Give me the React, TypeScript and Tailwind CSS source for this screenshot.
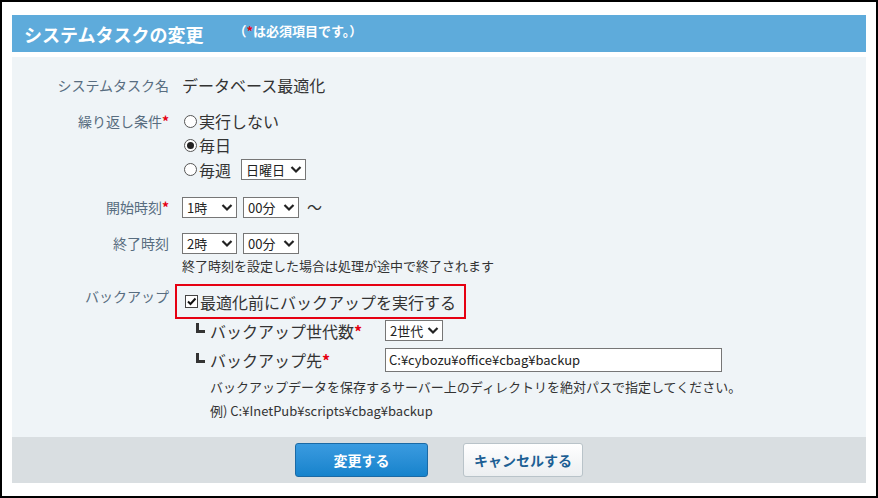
import React from "react";

const font = { fontFamily: '"Noto Sans CJK JP", "Noto Sans", sans-serif' };

function Req() {
  return <span className="text-[#e60012] font-bold">*</span>;
}

function Chevron() {
  return (
    <svg width="12" height="9" viewBox="0 0 12 9" className="shrink-0">
      <path d="M1.5 2 L6 6.5 L10.5 2" fill="none" stroke="#222" strokeWidth="2.2" />
    </svg>
  );
}

function Select({ value, w }: { value: string; w: string }) {
  return (
    <div
      className={`${w} h-[21px] bg-white border border-[#767676] flex items-center justify-between pl-[4px] pr-[3px] text-[13px] text-[#222] leading-none`}
    >
      <span>{value}</span>
      <Chevron />
    </div>
  );
}

function Radio({ checked }: { checked?: boolean }) {
  return (
    <span className="w-[13px] h-[13px] rounded-full border border-[#555] bg-white flex items-center justify-center mr-[2px] shrink-0">
      {checked && <span className="w-[7px] h-[7px] rounded-full bg-[#222]" />}
    </span>
  );
}

function Row({ label, children, className = "" }: { label: React.ReactNode; children: React.ReactNode; className?: string }) {
  return (
    <div className={`flex ${className}`}>
      <div className="w-[157px] shrink-0 text-right text-[14px] text-[#586d80] leading-[24px]">{label}</div>
      <div className="ml-[13px] flex-1">{children}</div>
    </div>
  );
}

function Elbow() {
  return <span className="w-[9px] h-[10px] border-l-[3px] border-b-[3px] border-[#333] mr-[5px] mb-[5px] shrink-0" />;
}

export default function App() {
  return (
    <div className="w-[878px] h-[498px] border-2 border-black bg-white pt-[13px] px-[10px]" style={font}>
      <div className="h-[37px] bg-[#5eabdb] flex items-center pl-[12px]">
        <h1 className="text-[18px] font-bold text-white leading-none">システムタスクの変更</h1>
        <span className="ml-[30px] mb-[6px] text-[13px] font-bold text-white leading-none">
          （<span className="text-[#e60012]">*</span>は必須項目です。）
        </span>
      </div>

      <div className="mt-[5px] h-[380px] bg-[#eff4f7] pt-[16px]">
        <Row label="システムタスク名">
          <div className="text-[16px] text-[#333] leading-[24px]">データベース最適化</div>
        </Row>

        <Row label={<>繰り返し条件<Req /></>} className="mt-[12px]">
          <div className="text-[16px] text-[#333] leading-[24px] ml-[2px]">
            <div className="flex items-center h-[24px]"><Radio />実行しない</div>
            <div className="flex items-center h-[24px]"><Radio checked />毎日</div>
            <div className="flex items-center h-[25px]">
              <Radio />毎週
              <div className="ml-[10px]"><Select value="日曜日" w="w-[65px]" /></div>
            </div>
          </div>
        </Row>

        <Row label={<>開始時刻<Req /></>} className="mt-[13px]">
          <div className="flex items-center h-[24px] gap-[6px]">
            <Select value="1時" w="w-[55px]" />
            <Select value="00分" w="w-[56px]" />
            <span className="text-[15px] text-[#333] ml-[2px]">～</span>
          </div>
        </Row>

        <Row label="終了時刻" className="mt-[12px]">
          <div className="flex items-center h-[24px] gap-[6px]">
            <Select value="2時" w="w-[55px]" />
            <Select value="00分" w="w-[56px]" />
          </div>
          <div className="text-[13px] text-[#333] leading-[20px] mt-[1px]">終了時刻を設定した場合は処理が途中で終了されます</div>
        </Row>

        <Row label="バックアップ" className="mt-[8px]">
          <div className="-ml-[7px] w-[291px] h-[35px] border-2 border-[#e60012] flex items-center pl-[8px] text-[16px] text-[#333]">
            <span className="w-[13px] h-[13px] border border-[#444] bg-white flex items-center justify-center mr-[2px]">
              <svg width="11" height="11" viewBox="0 0 11 11">
                <path d="M2 5.5 L4.5 8 L9.5 2.5" fill="none" stroke="#111" strokeWidth="2" />
              </svg>
            </span>
            最適化前にバックアップを実行する
          </div>
          <div className="ml-[14px] text-[16px] text-[#333]">
            <div className="flex items-center h-[21px] mt-[1px]">
              <span className="w-[189px] flex items-center"><Elbow />バックアップ世代数<Req /></span>
              <Select value="2世代" w="w-[58px]" />
            </div>
            <div className="flex items-center h-[24px] mt-[7px]">
              <span className="w-[189px] flex items-center"><Elbow />バックアップ先<Req /></span>
              <div className="w-[337px] h-[24px] bg-white border border-[#767676] flex items-center pl-[3px] text-[13px] text-[#222]">
                C:¥cybozu¥office¥cbag¥backup
              </div>
            </div>
            <div className="text-[13px] leading-[20px] mt-[5px] ml-[14px]">
              バックアップデータを保存するサーバー上のディレクトリを絶対パスで指定してください。
            </div>
            <div className="text-[13px] leading-[20px] mt-[4px] ml-[14px]">例) C:¥InetPub¥scripts¥cbag¥backup</div>
          </div>
        </Row>
      </div>

      <div className="h-[46px] bg-[#d9dee1] flex items-center pl-[283px]">
        <button className="w-[133px] h-[34px] rounded-[3px] border border-[#1b6aa5] bg-gradient-to-b from-[#3a9be0] to-[#1583cc] text-white text-[14px] font-bold">
          変更する
        </button>
        <button className="ml-[35px] w-[120px] h-[34px] rounded-[3px] border border-[#b9c3c9] bg-gradient-to-b from-white to-[#eceff1] text-[#1c5f94] text-[14px] font-bold">
          キャンセルする
        </button>
      </div>
    </div>
  );
}
